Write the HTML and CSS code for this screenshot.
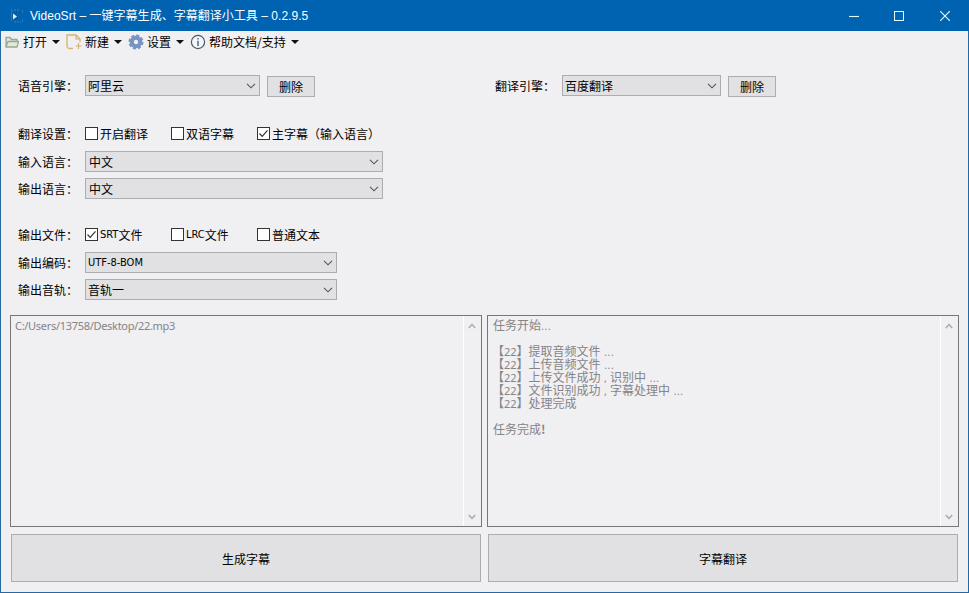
FILE: index.html
```html
<!DOCTYPE html>
<html lang="zh-CN">
<head>
<meta charset="utf-8">
<title>VideoSrt</title>
<link rel="stylesheet" href="styles.css">
</head>
<body>
<div class="window">
  <header class="titlebar">
    <svg class="app-icon" width="12" height="14" viewBox="0 0 12 14"><path d="M0 1h9M3 13h7" stroke="#3d83bd" stroke-dasharray="2 1"/><path d="M.5 2v10M11.5 1v3M11.5 10v3" stroke="#2978b8"/><path d="M1 4h5v7H1z" fill="#155590"/><path d="M2 4.500l4 3-4 3z" fill="#d7f5ff"/></svg>
    <h1 class="title">VideoSrt – 一键字幕生成、字幕翻译小工具 – 0.2.9.5</h1>
    <div class="controls">
      <svg width="10" height="10" viewBox="0 0 10 10"><path d="M0 5.500h10"/></svg>
      <svg width="10" height="10" viewBox="0 0 10 10"><path d="M.5.5h9v9h-9z"/></svg>
      <svg class="close" width="10" height="10" viewBox="0 0 10 10"><path d="M0 0l10 10M10 0L0 10"/></svg>
    </div>
  </header>
  <nav class="toolbar">
    <div class="tool open"><svg width="14" height="12" viewBox="0 0 14 12"><path d="M1 10.500V1.500h4l1.500 2H12v2M1 10.500l2-5h10.500l-1.500 5.500H1z" fill="#e3e8dc" stroke="#98a891" stroke-width="1.300"/></svg><span>打开</span><i class="caret"></i></div>
    <div class="tool new"><svg width="17" height="16" viewBox="0 0 17 16"><path d="M7 14.500H3.500Q1 14.500 1 12V1h9l4 4v3" fill="none" stroke="#d2b568" stroke-width="1.300"/><path d="M10 1v4h4M12.500 9v6M9.500 12h6" fill="none" stroke="#d2b568" stroke-width="1.200"/></svg><span>新建</span><i class="caret"></i></div>
    <div class="tool settings"><svg width="16" height="16" viewBox="0 0 16 16"><circle cx="8" cy="8" r="4.200" fill="none" stroke="#7793c1" stroke-width="4"/><circle cx="8" cy="8" r="6.600" fill="none" stroke="#7793c1" stroke-width="1.800" stroke-dasharray="3.200 1.984"/></svg><span>设置</span><i class="caret"></i></div>
    <div class="tool help"><svg width="16" height="16" viewBox="0 0 16 16"><circle cx="8" cy="8" r="6.600" fill="#f5f7fa" stroke="#4f5866" stroke-width="1.200"/><path d="M8 6.800V12M8 4v1.600" stroke="#5475a8" stroke-width="1.600"/></svg><span>帮助文档/支持</span><i class="caret"></i></div>
  </nav>
  <main class="content">
    <section class="engines">
      <div class="row">
        <label>语音引擎：</label>
        <div class="select voice"><span>阿里云</span><svg class="chev" viewBox="0 0 10 6"><path d="M1 .8l4 4 4-4"/></svg></div>
        <button class="small">删除</button>
      </div>
      <div class="row">
        <label>翻译引擎：</label>
        <div class="select trans"><span>百度翻译</span><svg class="chev" viewBox="0 0 10 6"><path d="M1 .8l4 4 4-4"/></svg></div>
        <button class="small">删除</button>
      </div>
    </section>
    <section class="group">
      <div class="row checks">
        <label>翻译设置：</label>
        <div class="check"><i class="box"></i>开启翻译</div>
        <div class="check"><i class="box"></i>双语字幕</div>
        <div class="check"><i class="box"><svg viewBox="0 0 11 11"><path d="M1.500 5.500l2.700 2.800 5.300-6"/></svg></i>主字幕（输入语言）</div>
      </div>
      <div class="row">
        <label>输入语言：</label>
        <div class="select lang"><span>中文</span><svg class="chev" viewBox="0 0 10 6"><path d="M1 .8l4 4 4-4"/></svg></div>
      </div>
      <div class="row">
        <label>输出语言：</label>
        <div class="select lang"><span>中文</span><svg class="chev" viewBox="0 0 10 6"><path d="M1 .8l4 4 4-4"/></svg></div>
      </div>
    </section>
    <section class="group">
      <div class="row checks">
        <label>输出文件：</label>
        <div class="check"><i class="box"><svg viewBox="0 0 11 11"><path d="M1.500 5.500l2.700 2.800 5.300-6"/></svg></i><span class="latin">SRT</span>文件</div>
        <div class="check"><i class="box"></i><span class="latin">LRC</span>文件</div>
        <div class="check"><i class="box"></i>普通文本</div>
      </div>
      <div class="row">
        <label>输出编码：</label>
        <div class="select out"><span class="latin">UTF-8-BOM</span><svg class="chev" viewBox="0 0 10 6"><path d="M1 .8l4 4 4-4"/></svg></div>
      </div>
      <div class="row">
        <label>输出音轨：</label>
        <div class="select out"><span>音轨一</span><svg class="chev" viewBox="0 0 10 6"><path d="M1 .8l4 4 4-4"/></svg></div>
      </div>
    </section>
    <section class="panels">
      <div class="panel">
        <div class="text"><p class="path">C:/Users/13758/Desktop/22.mp3</p></div>
        <div class="scroll"><svg viewBox="0 0 8 6"><path d="M.8 5L4 1.500 7.200 5"/></svg><svg viewBox="0 0 8 6"><path d="M.8 1L4 4.500 7.200 1"/></svg></div>
      </div>
      <div class="panel">
        <div class="text">
          <p>任务开始<span class="latin dots">...</span></p>
          <p></p>
          <p class="log">【<span class="num">22</span>】提取音频文件<span class="latin dots"> ...</span></p>
          <p class="log">【<span class="num">22</span>】上传音频文件<span class="latin dots"> ...</span></p>
          <p class="log">【<span class="num">22</span>】上传文件成功<span class="latin"> , </span>识别中<span class="latin dots"> ...</span></p>
          <p class="log">【<span class="num">22</span>】文件识别成功<span class="latin"> , </span>字幕处理中<span class="latin dots"> ...</span></p>
          <p class="log">【<span class="num">22</span>】处理完成</p>
          <p></p>
          <p>任务完成<b>!</b></p>
        </div>
        <div class="scroll"><svg viewBox="0 0 8 6"><path d="M.8 5L4 1.500 7.200 5"/></svg><svg viewBox="0 0 8 6"><path d="M.8 1L4 4.500 7.200 1"/></svg></div>
      </div>
    </section>
    <section class="actions">
      <button>生成字幕</button>
      <button>字幕翻译</button>
    </section>
  </main>
</div>
</body>
</html>
```
FILE: styles.css
```css
* { box-sizing: border-box; }
body { margin: 0; font: 12px "Noto Sans CJK SC", sans-serif; color: #000; }
svg { display: block; flex: none; }
p { margin: 0; }

.window {
  width: 969px;
  height: 593px;
  display: flex;
  flex-direction: column;
  background: #f0eff1;
  border: 1px solid #2668a2;
  border-top: 0;
}
.titlebar {
  height: 31px;
  flex: none;
  margin: 0 -1px;
  display: flex;
  align-items: center;
  padding: 0 19px 0 11px;
  background: #0063b1;
  color: #fff;
}
.title {
  margin: 0 0 0 7px;
  font: 12px/20px "Liberation Sans", "Noto Sans CJK SC", sans-serif;
  letter-spacing: 0.03px;
  white-space: nowrap;
}
.controls { margin-left: auto; display: flex; gap: 35px; }
.controls svg { fill: none; stroke: #e4fbff; stroke-width: 1.100; }
.controls .close { margin-left: 1px; }

.toolbar { height: 22px; flex: none; display: flex; padding-left: 4px; }
.tool { display: flex; align-items: center; white-space: nowrap; }
.tool span { margin: 0 0 2px 4px; }
.open { width: 61px; }
.new { width: 62px; }
.new span { margin-left: 2px; }
.settings { width: 62px; }
.settings span { margin-left: 3px; }
.help span { margin-left: 3px; }
.caret {
  margin-left: 5px;
  border: 4px solid transparent;
  border-top-color: #111;
  border-bottom: 0;
}

.content { padding: 22px 9px 0; flex: 1; }
.row { display: flex; align-items: center; height: 21px; }
.row label { width: 67px; flex: none; white-space: nowrap; }
.engines { display: grid; grid-template-columns: 477px 1fr; padding-left: 8px; height: 22px; }
.group { display: grid; gap: 6px; padding-left: 8px; margin-top: 25px; }
.group + .group { margin-top: 24px; }
.select {
  height: 21px;
  display: flex;
  align-items: center;
  justify-content: space-between;
  padding: 0 3px 0 2px;
  background: #e1e0e2;
  border: 1px solid #adadaf;
}
.voice { width: 175px; }
.trans { width: 159px; }
.lang { width: 298px; padding-left: 3px; }
.out { width: 252px; }
.chev { width: 10px; height: 6px; fill: none; stroke: #555; stroke-width: 1.100; }
button {
  font: inherit;
  color: #000;
  padding: 0;
  background: #e1e0e2;
  border: 1px solid #adadaf;
}
.small { width: 48px; height: 21px; margin: 2px 0 0 7px; }
.checks { height: 22px; margin-bottom: 1px; }
.check { width: 86px; display: flex; align-items: center; white-space: nowrap; }
.box {
  width: 13px;
  height: 13px;
  flex: none;
  margin-right: 2px;
  background: #fff;
  border: 1px solid #333;
}
.box svg { width: 11px; height: 11px; fill: none; stroke: #333; stroke-width: 1.200; }
.latin { font-family: "DejaVu Sans Condensed", "DejaVu Sans", sans-serif; font-size: 11px; white-space: pre; }

.panels { display: grid; grid-template-columns: 472px 472px; gap: 5px; margin-top: 15px; }
.panel {
  height: 212px;
  display: flex;
  border: 1px solid #77777b;
  color: #858487;
}
.text { flex: 1; padding: 2px 5px; line-height: 13px; }
.text p { height: 13px; white-space: nowrap; }
.text .path { margin-left: -1px; font: 11px/15px "Noto Sans", sans-serif; letter-spacing: -0.3px; }
.log { margin-left: -1px; }
.num { font-family: "Noto Sans", sans-serif; font-size: 11px; }
.dots { letter-spacing: 0.2px; }
.scroll {
  width: 18px;
  display: flex;
  flex-direction: column;
  justify-content: space-between;
  align-items: center;
  padding: 7px 2px 6px 0;
  border-left: 1px solid #fff;
}
.scroll svg { width: 8px; height: 6px; fill: none; stroke: #aaa9ac; stroke-width: 1.500; }
.actions { display: grid; grid-template-columns: 470px 470px; gap: 7px; padding-left: 1px; margin-top: 7px; }
.actions button { height: 48px; }
```
